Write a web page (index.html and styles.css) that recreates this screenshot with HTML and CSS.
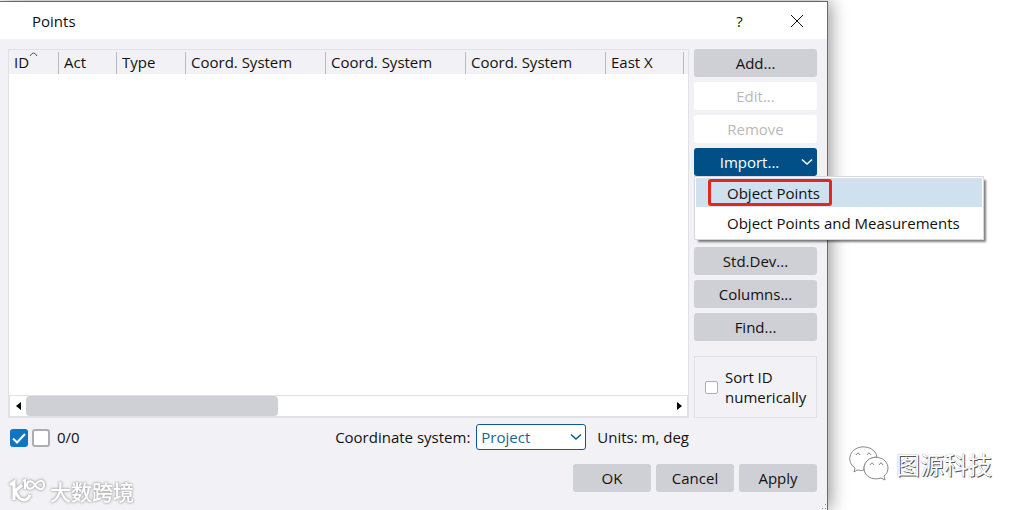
FILE: index.html
```
<!DOCTYPE html>
<html lang="en">
<head>
  <meta charset="UTF-8">
  <title>Points</title>
  <link rel="stylesheet" href="styles.css">
</head>
<body>

  <main class="dialog">
    <header class="titlebar">
      <h1>Points</h1>
      <button class="title-btn" type="button">?</button>
      <button class="title-btn" type="button" aria-label="Close">
        <svg width="14" height="14" viewBox="0 0 14 14"><path d="M1 1L13 13M13 1L1 13" /></svg>
      </button>
    </header>

    <div class="content">
      <section class="left">
        <div class="table-box">
          <table>
            <thead>
              <tr>
                <th class="col-id">ID<svg class="sort" width="9" height="5" viewBox="0 0 9 5"><path d="M1 4Q4.500 -2 8 4" /></svg></th>
                <th class="col-act">Act</th>
                <th class="col-type">Type</th>
                <th class="col-system">Coord. System</th>
                <th class="col-system">Coord. System</th>
                <th class="col-system">Coord. System</th>
                <th class="col-east">East X</th>
                <td></td>
              </tr>
            </thead>
          </table>
          <div class="scrollbar">
            <button class="arrow" type="button" aria-label="Scroll left">
              <svg width="5" height="8" viewBox="0 0 5 8"><path d="M5 0V8L0 4Z" /></svg>
            </button>
            <div class="track"><div class="thumb"></div></div>
            <button class="arrow" type="button" aria-label="Scroll right">
              <svg width="5" height="8" viewBox="0 0 5 8"><path d="M0 0V8L5 4Z" /></svg>
            </button>
          </div>
        </div>

        <div class="status">
          <div class="counter">
            <input type="checkbox" class="check" aria-label="Select all" checked>
            <input type="checkbox" class="check" aria-label="Select none">
            <span>0/0</span>
          </div>
          <div class="system">
            <label for="system">Coordinate system:</label>
            <select id="system">
              <option>Project</option>
            </select>
            <span class="units">Units: m, deg</span>
          </div>
        </div>
      </section>

      <aside class="actions">
        <button class="btn" type="button">Add...</button>
        <button class="btn" type="button" disabled>Edit...</button>
        <button class="btn" type="button" disabled>Remove</button>
        <div class="dropdown">
          <button class="btn primary" type="button">
            <span>Import...</span>
            <svg width="12" height="8" viewBox="0 0 12 8"><path d="M1 1.500L6 6L11 1.500" /></svg>
          </button>
          <div class="menu">
            <button class="item active" type="button">Object Points<span class="mark"></span></button>
            <button class="item" type="button">Object Points and Measurements</button>
          </div>
        </div>
        <button class="btn" type="button">Std.Dev...</button>
        <button class="btn" type="button">Columns...</button>
        <button class="btn" type="button">Find...</button>
        <div class="sort-box">
          <input type="checkbox" class="check small" id="numeric">
          <label for="numeric">Sort ID numerically</label>
        </div>
      </aside>
    </div>

    <footer class="footer">
      <button class="btn" type="button">OK</button>
      <button class="btn" type="button">Cancel</button>
      <button class="btn" type="button">Apply</button>
    </footer>

    <svg class="grip" width="6" height="6" viewBox="0 0 6 6"><path d="M4 0h1v1h-1zM1 4h1v1h-1zM4 4h1v1h-1z" /></svg>

    <div class="watermark">
      <svg width="38" height="26" viewBox="0 0 38 26">
        <path d="M2 7L6 4V22M14 7L7 13Q11 22 16 22Q20 22 22 17" stroke-width="3" />
        <path d="M15 3L17 2V11" stroke-width="2" />
        <path d="M27 7C24 2 19 2 19 7S24 12 27 7S36 1 36 7S30 12 27 7" stroke-width="2" />
      </svg>
      <span lang="zh">大数跨境</span>
    </div>
  </main>

  <div class="side">
    <div class="brand">
      <svg width="42" height="36" viewBox="0 0 42 36">
        <path d="M6 26L7 22C-2 16 1 3 13 1C22 0 28 5 29 11C22 11 15 16 16 24C13 25 11 24 9 24Z" />
        <path d="M37 34L33 32C24 35 16 30 16 22C17 8 38 8 40 21C40 25 39 28 36 30Z" />
        <path d="M8 9Q10 5 12 9M19 9Q21 5 23 9M22 19Q24 15 26 19M31 19Q33 15 35 19" />
      </svg>
      <span lang="zh">图源科技</span>
    </div>
  </div>

</body>
</html>
```

FILE: styles.css
```
* {
  box-sizing: border-box;
}

body {
  margin: 0;
  min-height: 100vh;
  display: grid;
  grid-template-columns: 1fr 201px;
  background: #fff;
  color: #111;
  font-family: "Open Sans", "Noto Sans CJK SC", sans-serif;
  font-size: 15px;
  line-height: 20px;
  overflow: hidden;
}

button, select {
  font: inherit;
  color: inherit;
  border: none;
  padding: 0;
}

svg {
  fill: none;
  stroke: currentColor;
}

.dialog {
  position: relative;
  display: flex;
  flex-direction: column;
  margin-top: 1px;
  background: #f2f1f6;
  border-top: 1px solid #6a6a6a;
  border-right: 1px solid #6a6a6a;
  box-shadow: 3px 0 16px rgba(0, 0, 0, 0.4);
}

.titlebar {
  display: flex;
  align-items: center;
  height: 37px;
  padding-left: 32px;
  padding-right: 2px;
  background: #fff;
}

.titlebar h1 {
  flex: 1;
  margin: 0;
  font-size: 15px;
  font-weight: normal;
}

.title-btn {
  display: flex;
  align-items: center;
  justify-content: center;
  width: 57px;
  height: 36px;
  background: none;
}

.content {
  display: flex;
  gap: 5px;
  padding: 10px 10px 0 8px;
}

.left {
  flex: 1;
  min-width: 0;
}

/* table */
.table-box {
  display: flex;
  flex-direction: column;
  height: 369px;
  background: #fff;
  border: 1px solid #e0e0e5;
  border-bottom-width: 2px;
}

table {
  width: 100%;
  table-layout: fixed;
  border-collapse: collapse;
  background: #f2f1f6;
}

th {
  height: 24px;
  padding: 0 0 0 5px;
  font-weight: normal;
  text-align: left;
  white-space: nowrap;
  background: linear-gradient(#b9bac0, #b9bac0) right bottom / 1px 22px no-repeat;
}

td {
  padding: 0;
}

.col-id {
  width: 50px;
}

.col-act {
  width: 58px;
}

.col-type {
  width: 69px;
}

.col-system {
  width: 140px;
}

.col-east {
  width: 78px;
}

.sort {
  vertical-align: top;
  color: #555;
  stroke-width: 1;
}

.scrollbar {
  display: flex;
  height: 21px;
  margin-top: auto;
  border: 1px solid #e0e0e5;
  border-bottom: none;
}

.arrow {
  display: flex;
  align-items: center;
  justify-content: center;
  width: 16px;
  background: #fff;
}

.arrow svg {
  fill: #000;
  stroke: none;
}

.track {
  flex: 1;
  display: flex;
}

.thumb {
  width: 39%;
  background: #cfd0d6;
  border-radius: 4px;
}

/* row under the table */
.status {
  display: flex;
  align-items: center;
  justify-content: space-between;
  padding-top: 6px;
}

.counter {
  display: flex;
  align-items: center;
  gap: 4px;
  padding-left: 2px;
}

.counter span {
  padding-left: 3px;
}

.check {
  appearance: none;
  width: 18px;
  height: 18px;
  margin: 2px 0 0;
  background: #fff;
  border: 2px solid #adadb3;
  border-radius: 3px;
}

.check:checked {
  border: none;
  background: #0f75c0 url("data:image/svg+xml,%3Csvg xmlns='http://www.w3.org/2000/svg' viewBox='0 0 18 18'%3E%3Cpath d='M3 9.500L7 13.500L15 5' fill='none' stroke='white' stroke-width='2'/%3E%3C/svg%3E") no-repeat;
}

.check.small {
  flex: none;
  width: 13px;
  height: 13px;
  margin: 0;
  border-width: 1px;
  border-radius: 2px;
}

.system {
  display: flex;
  align-items: center;
  gap: 6px;
}

select {
  appearance: none;
  width: 110px;
  height: 26px;
  padding-left: 4px;
  color: #1d6396;
  border: 1px solid #0f5a8e;
  border-radius: 3px;
  background: #fff url("data:image/svg+xml,%3Csvg xmlns='http://www.w3.org/2000/svg' width='12' height='8' viewBox='0 0 12 8'%3E%3Cpath d='M1 1.500L6 6L11 1.500' fill='none' stroke='%230f5a8e' stroke-width='1.500'/%3E%3C/svg%3E") no-repeat right 3px center;
}

.units {
  padding-left: 5px;
}

/* buttons on the right */
.btn {
  height: 28px;
  background: #cfd0d6;
  border-radius: 3px;
}

.btn:disabled {
  background: #fff;
  color: #b9b9bd;
}

.actions {
  display: flex;
  flex-direction: column;
  gap: 5px;
  width: 123px;
}

.dropdown {
  position: relative;
  margin-bottom: 66px;
}

.primary {
  display: flex;
  align-items: center;
  width: 100%;
  padding-right: 4px;
  background: #005087;
  color: #fff;
}

.primary span {
  flex: 1;
  padding-left: 4px;
}

.primary svg {
  stroke-width: 1.5;
}

.menu {
  position: absolute;
  top: 28px;
  left: 0;
  z-index: 2;
  display: flex;
  flex-direction: column;
  width: 290px;
  padding: 1px;
  background: #fff;
  border: 1px solid #d8d8dc;
  box-shadow: 3px 3px 2px -1px rgba(0, 0, 0, 0.5);
}

.item {
  position: relative;
  height: 31px;
  padding-left: 31px;
  text-align: left;
  white-space: nowrap;
  background: #fff;
}

.item.active {
  height: 29px;
  background: #cfe0ee;
}

.mark {
  position: absolute;
  top: 1px;
  left: 12px;
  width: 124px;
  height: 27px;
  border: 3px solid #e5261f;
  border-radius: 3px;
}

.sort-box {
  display: flex;
  align-items: center;
  gap: 7px;
  height: 62px;
  margin-top: 10px;
  padding-left: 10px;
  border: 1px solid #e0e0e5;
}

.footer {
  display: flex;
  justify-content: flex-end;
  gap: 5px;
  padding: 14px 10px 0;
}

.footer .btn {
  width: 78px;
}

.grip {
  position: absolute;
  right: 0;
  bottom: 0;
  fill: #999;
  stroke: none;
}

/* logos */
.watermark {
  position: absolute;
  left: 8px;
  bottom: 6px;
  display: flex;
  align-items: center;
  gap: 4px;
  color: #fff;
  font-family: "Noto Sans CJK SC", sans-serif;
  font-size: 21px;
  font-weight: 500;
  line-height: 24px;
  filter: drop-shadow(0 0 1px #aaa) drop-shadow(0 0 1px #bbb);
}

.side {
  display: flex;
  align-items: flex-end;
  padding: 0 0 28px 20px;
}

.brand {
  display: flex;
  align-items: center;
  gap: 6px;
  color: #fff;
  font-family: "Noto Sans CJK SC", sans-serif;
  font-size: 24px;
  line-height: 36px;
  text-shadow: 1px 1px 0 #555, 0 0 1px #888;
}

.brand svg {
  fill: #fff;
  stroke: #888;
  stroke-width: 1;
}
```
